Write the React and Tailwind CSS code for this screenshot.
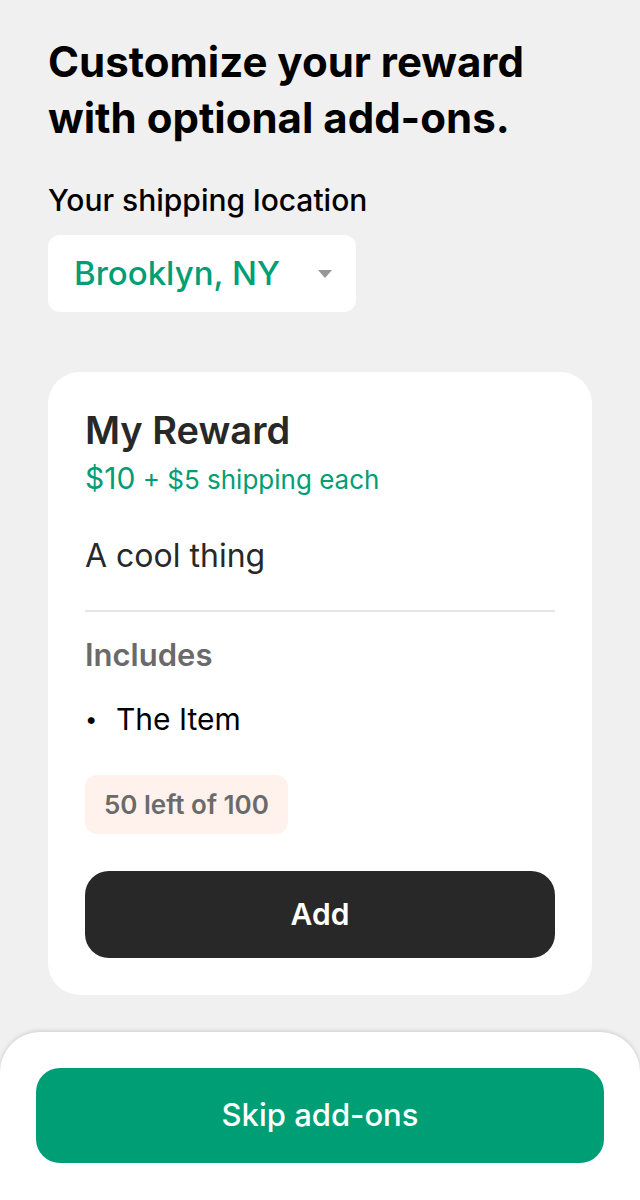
import React from 'react';

export default function App() {
    return (
        <div className="min-h-[1200px] bg-[#f0f0f0] flex flex-col font-['Inter',sans-serif]">
            <div className="px-12 pt-[34px] pb-[60px]">
                {/* Title */}
                <h1 className="max-w-[500px] text-[42px] leading-[56px] font-bold text-black">
                    Customize your reward with optional add-ons.
                </h1>

                <p className="mt-[37px] text-[30px] leading-[34px] font-medium text-black">
                    Your shipping location
                </p>

                {/* Location dropdown */}
                <button className="mt-[18px] w-[308px] h-[77px] bg-white rounded-[12px] flex items-center pl-[26px] pr-[24px]">
                    <span className="text-[33px] font-medium text-[#009e74]">
                        Brooklyn, NY
                    </span>
                    <svg className="ml-auto" width="14" height="8" viewBox="0 0 14 8">
                        <path d="M0 0 H14 L7 8 Z" fill="#969696" />
                    </svg>
                </button>
            </div>

            {/* Reward card */}
            <div className="mx-12 bg-white rounded-[32px] px-[37px] pt-[35px] pb-[37px]">
                <h2 className="text-[38px] leading-[46px] font-semibold text-[#282828]">My Reward</h2>
                <p className="mt-[7px] text-[#009e74] leading-[36px]">
                    <span className="text-[30px]">$10</span>
                    <span className="text-[26px]"> + $5 shipping each</span>
                </p>
                <p className="mt-[35px] text-[32px] leading-[40px] text-[#282828]">A cool thing</p>

                <div className="mt-[34px] h-[2px] bg-[#e5e5e5]" />

                <p className="mt-[24px] text-[31px] leading-[38px] font-semibold text-[#6a6a6a]">Includes</p>
                <ul className="mt-[27px]">
                    <li className="flex items-center text-[30px] leading-[36px] text-black">
                        <span className="w-[31px] text-[22px]">•</span>
                        The Item
                    </li>
                </ul>

                <div className="mt-[38px] inline-flex items-center h-[59px] px-[19px] bg-[#fff1ec] rounded-[12px]">
                    <span className="text-[26px] font-semibold text-[#6a6a6a]">50 left of 100</span>
                </div>

                <button className="mt-[37px] w-full h-[87px] bg-[#282828] rounded-[24px] text-white text-[30px] font-semibold">
                    Add
                </button>
            </div>

            {/* Bottom sheet */}
            <div className="mt-auto bg-white rounded-t-[40px] shadow-[0_-1px_4px_rgba(0,0,0,0.15)] px-9 pt-[36px] pb-[37px]">
                <button className="w-full h-[95px] bg-[#009e74] rounded-[24px] text-white text-[31px] font-medium">
                    Skip add-ons
                </button>
            </div>
        </div>
    );
}
